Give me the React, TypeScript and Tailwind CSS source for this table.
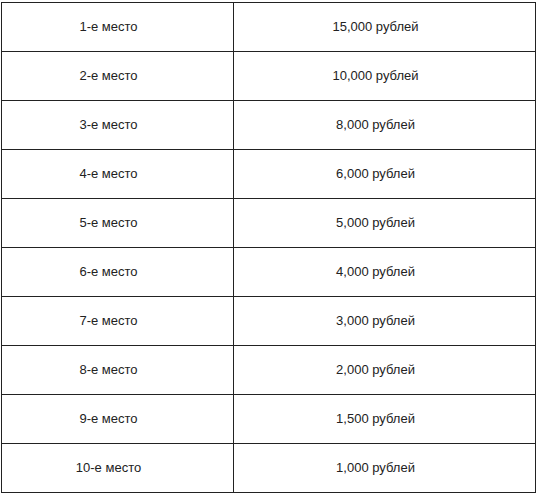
const rows = [
  ['1-е место', '15,000 рублей'],
  ['2-е место', '10,000 рублей'],
  ['3-е место', '8,000 рублей'],
  ['4-е место', '6,000 рублей'],
  ['5-е место', '5,000 рублей'],
  ['6-е место', '4,000 рублей'],
  ['7-е место', '3,000 рублей'],
  ['8-е место', '2,000 рублей'],
  ['9-е место', '1,500 рублей'],
  ['10-е место', '1,000 рублей'],
];

const App: React.FC = () => {
  return (
    <div className="bg-white w-[542px] h-[495px] pt-[2px] pl-[1px] font-['Liberation_Sans',Arial,sans-serif]">
      <table className="border-collapse w-[535px] text-[13px] text-[#222]">
        <tbody>
          {rows.map(([place, prize]) => (
            <tr key={place} className="h-[49px]">
              <td className="w-[232px] border border-[#222] text-center pr-[18px] p-0">{place}</td>
              <td className="border border-[#222] border-l-[#444] text-center pr-[18px] p-0">{prize}</td>
            </tr>
          ))}
        </tbody>
      </table>
    </div>
  );
};

export default App;
